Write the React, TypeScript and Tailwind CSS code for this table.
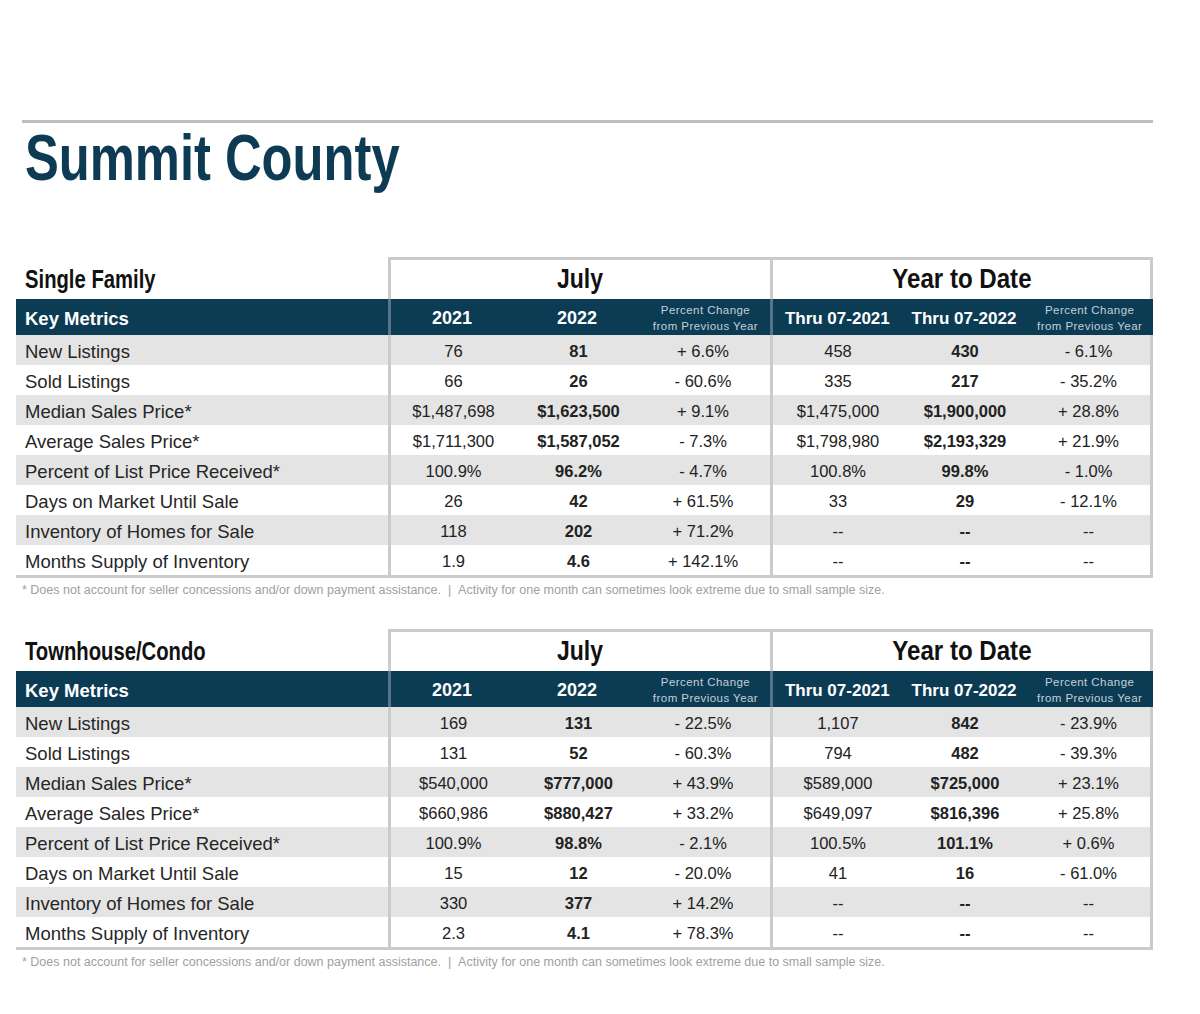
import { FC } from 'react';

type Row = {
  label: string;
  values: [string, string, string, string, string, string];
};

type Section = {
  title: string;
  rows: Row[];
};

const sections: Section[] = [
  {
    title: 'Single Family',
    rows: [
      { label: 'New Listings', values: ['76', '81', '+ 6.6%', '458', '430', '- 6.1%'] },
      { label: 'Sold Listings', values: ['66', '26', '- 60.6%', '335', '217', '- 35.2%'] },
      { label: 'Median Sales Price*', values: ['$1,487,698', '$1,623,500', '+ 9.1%', '$1,475,000', '$1,900,000', '+ 28.8%'] },
      { label: 'Average Sales Price*', values: ['$1,711,300', '$1,587,052', '- 7.3%', '$1,798,980', '$2,193,329', '+ 21.9%'] },
      { label: 'Percent of List Price Received*', values: ['100.9%', '96.2%', '- 4.7%', '100.8%', '99.8%', '- 1.0%'] },
      { label: 'Days on Market Until Sale', values: ['26', '42', '+ 61.5%', '33', '29', '- 12.1%'] },
      { label: 'Inventory of Homes for Sale', values: ['118', '202', '+ 71.2%', '--', '--', '--'] },
      { label: 'Months Supply of Inventory', values: ['1.9', '4.6', '+ 142.1%', '--', '--', '--'] },
    ],
  },
  {
    title: 'Townhouse/Condo',
    rows: [
      { label: 'New Listings', values: ['169', '131', '- 22.5%', '1,107', '842', '- 23.9%'] },
      { label: 'Sold Listings', values: ['131', '52', '- 60.3%', '794', '482', '- 39.3%'] },
      { label: 'Median Sales Price*', values: ['$540,000', '$777,000', '+ 43.9%', '$589,000', '$725,000', '+ 23.1%'] },
      { label: 'Average Sales Price*', values: ['$660,986', '$880,427', '+ 33.2%', '$649,097', '$816,396', '+ 25.8%'] },
      { label: 'Percent of List Price Received*', values: ['100.9%', '98.8%', '- 2.1%', '100.5%', '101.1%', '+ 0.6%'] },
      { label: 'Days on Market Until Sale', values: ['15', '12', '- 20.0%', '41', '16', '- 61.0%'] },
      { label: 'Inventory of Homes for Sale', values: ['330', '377', '+ 14.2%', '--', '--', '--'] },
      { label: 'Months Supply of Inventory', values: ['2.3', '4.1', '+ 78.3%', '--', '--', '--'] },
    ],
  },
];

const PctHeader: FC = () => (
  <div className="flex flex-col items-center justify-center -mt-[2px] text-[11.5px] leading-[16px] text-[#c3cfd7] tracking-[0.45px] whitespace-nowrap">
    <span>Percent Change</span>
    <span>from Previous Year</span>
  </div>
);

const Cell: FC<{ value: string; bold?: boolean }> = ({ value, bold }) => (
  <div className={`flex items-center justify-center text-[16.5px] text-[#222] ${bold ? 'font-bold' : ''}`}>
    {value}
  </div>
);

const MetricsTable: FC<{ section: Section }> = ({ section }) => (
  <div className="flex flex-col">
    {/* top heading row */}
    <div className="flex h-[42px]">
      <div className="w-[372px] ml-[16px] pl-[9px] flex items-end pb-[7px]">
        <span className="inline-block origin-left scale-x-[0.81] text-[25px] leading-none font-bold text-[#111]">
          {section.title}
        </span>
      </div>
      <div className="w-[382px] border-l-[3px] border-t-[3px] border-[#cbcbcb] flex items-end justify-center pb-[6px]">
        <span className="inline-block scale-x-[0.82] text-[28px] leading-none font-bold text-[#111]">July</span>
      </div>
      <div className="w-[383px] border-l-[3px] border-t-[3px] border-r-[3px] border-[#cbcbcb] flex items-end justify-center pb-[6px]">
        <span className="inline-block scale-x-[0.86] text-[28px] leading-none font-bold text-[#111] whitespace-nowrap">
          Year to Date
        </span>
      </div>
    </div>

    {/* dark header */}
    <div className="flex h-[36px] ml-[16px] w-[1137px] bg-[#0c3c54] text-white">
      <div className="w-[372px] pl-[9px] pt-[3px] flex items-center text-[18.5px] font-bold">Key Metrics</div>
      <div className="w-[382px] border-l-[3px] border-[#56758a] grid grid-cols-[125px_125px_129px] pt-[3px]">
        <div className="flex items-center justify-center text-[18px] font-bold -ml-[3px]">2021</div>
        <div className="flex items-center justify-center text-[18px] font-bold -ml-[3px]">2022</div>
        <PctHeader />
      </div>
      <div className="w-[383px] border-l-[3px] border-[#56758a] grid grid-cols-3 pt-[3px]">
        <div className="flex items-center justify-center text-[17px] font-bold whitespace-nowrap ml-[2px]">Thru 07-2021</div>
        <div className="flex items-center justify-center text-[17px] font-bold whitespace-nowrap ml-[2px]">Thru 07-2022</div>
        <PctHeader />
      </div>
    </div>

    {/* data rows */}
    <div className="ml-[16px] w-[1137px] border-b-[3px] border-[#cbcbcb]">
      {section.rows.map((row, i) => (
        <div key={row.label} className={`flex h-[30px] pt-[3px] ${i % 2 === 0 ? 'bg-[#e4e4e4]' : 'bg-white'}`}>
          <div className="w-[372px] pl-[9px] flex items-center text-[18.5px] text-[#262626]">{row.label}</div>
          <div className="w-[382px] border-l-[3px] border-[#cbcbcb] grid grid-cols-[125px_125px_124px] -mt-[3px] pt-[3px]">
            <Cell value={row.values[0]} />
            <Cell value={row.values[1]} bold />
            <Cell value={row.values[2]} />
          </div>
          <div className="w-[383px] border-l-[3px] border-r-[3px] border-[#cbcbcb] grid grid-cols-[130px_124px_123px] -mt-[3px] pt-[3px]">
            <Cell value={row.values[3]} />
            <Cell value={row.values[4]} bold />
            <Cell value={row.values[5]} />
          </div>
        </div>
      ))}
    </div>

    <p className="ml-[22px] mt-[4px] h-[16px] leading-[16px] text-[12.5px] text-[#a0a0a0] whitespace-nowrap">
      * Does not account for seller concessions and/or down payment assistance.&nbsp;&nbsp;|&nbsp;&nbsp;Activity for one month can sometimes look extreme due to small sample size.
    </p>
  </div>
);

const App: FC = () => {
  return (
    <div className="w-[1200px] h-[1014px] bg-white overflow-hidden font-['Liberation_Sans',Arial,sans-serif]">
      <div className="pt-[120px]">
        <div className="ml-[22px] w-[1131px] h-[3px] bg-[#bfbfbf]" />
        <h1 className="mt-[2px] ml-[25px] h-[65px]">
          <span className="inline-block origin-left scale-x-[0.78] text-[65px] leading-none font-bold text-[#0d3b53] whitespace-nowrap">
            Summit County
          </span>
        </h1>
      </div>

      <div className="mt-[67px] flex flex-col gap-[31px]">
        {sections.map((s) => (
          <MetricsTable key={s.title} section={s} />
        ))}
      </div>
    </div>
  );
};

export default App;
